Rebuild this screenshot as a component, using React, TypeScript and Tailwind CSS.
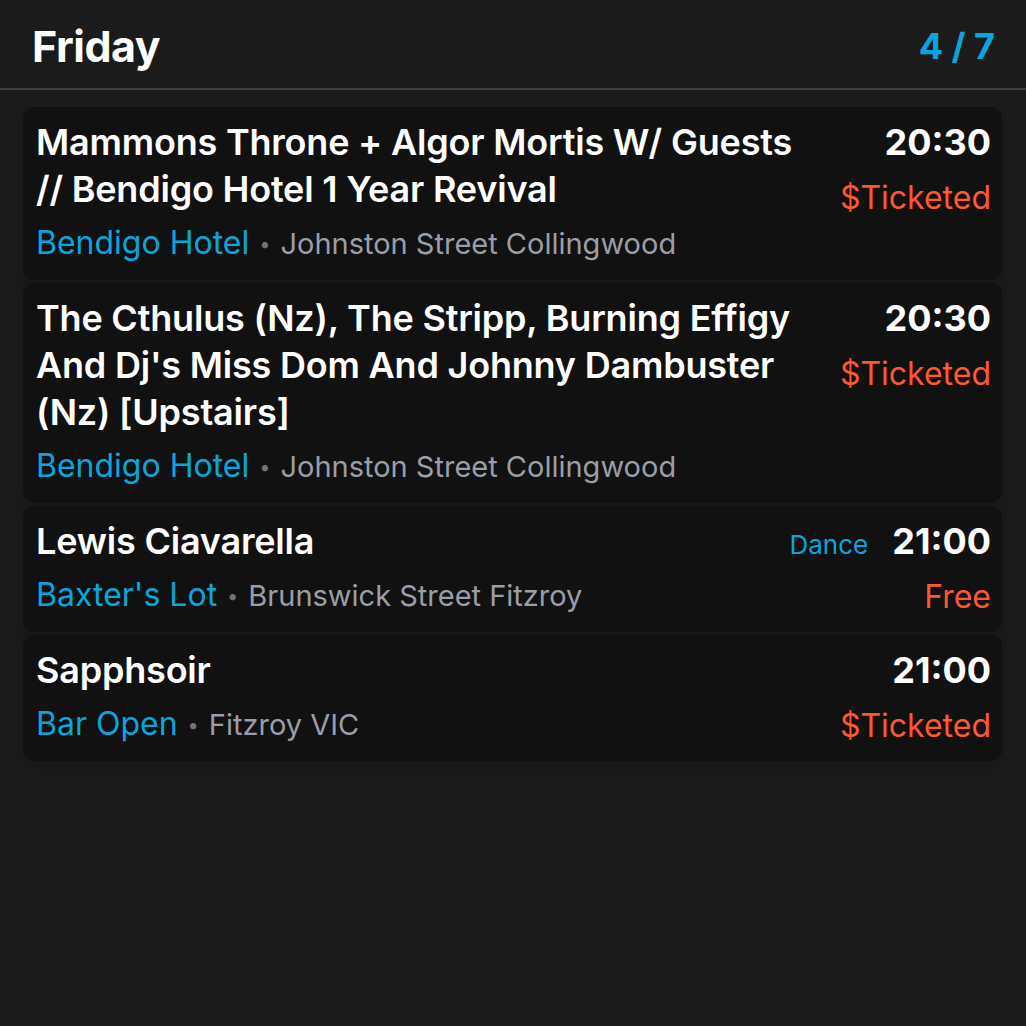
import { Fragment } from 'react';

interface Gig {
  title: string;
  venue: string;
  address: string;
  time: string;
  price: string;
  genre?: string;
}

const GIGS: Gig[] = [
  {
    title: 'Mammons Throne + Algor Mortis W/ Guests // Bendigo Hotel 1 Year Revival',
    venue: 'Bendigo Hotel',
    address: 'Johnston Street Collingwood',
    time: '20:30',
    price: '$Ticketed',
  },
  {
    title: "The Cthulus (Nz), The Stripp, Burning Effigy And Dj's Miss Dom And Johnny Dambuster (Nz) [Upstairs]",
    venue: 'Bendigo Hotel',
    address: 'Johnston Street Collingwood',
    time: '20:30',
    price: '$Ticketed',
  },
  {
    title: 'Lewis Ciavarella',
    venue: "Baxter's Lot",
    address: 'Brunswick Street Fitzroy',
    time: '21:00',
    price: 'Free',
    genre: 'Dance',
  },
  {
    title: 'Sapphsoir',
    venue: 'Bar Open',
    address: 'Fitzroy VIC',
    time: '21:00',
    price: '$Ticketed',
  },
];

const GigCard = ({ gig }: { gig: Gig }) => (
  <div className="flex gap-10 rounded-xl bg-[#111111] pl-[13px] pr-[11px] pt-[12px] pb-[15px] shadow-[0_6px_14px_rgba(0,0,0,0.12)]">
    <div className="flex-1 min-w-0">
      <h3 className="text-[36px] leading-[47px] font-semibold text-white tracking-[-0.2px]">{gig.title}</h3>
      <p className="mt-[8px] text-[32px] leading-[44px] whitespace-nowrap">
        <span className="leading-none text-[#09a6dd]">{gig.venue}</span>
        <span className="mx-[10px] text-[20px] leading-none align-[3px] text-[#6f737c]">•</span>
        <span className="text-[29px] leading-none text-[#9a9ea8]">{gig.address}</span>
      </p>
    </div>
    <div className="flex flex-col items-end shrink-0">
      <div className="flex items-baseline gap-6">
        {gig.genre && <span className="text-[26px] leading-none text-[#09a6dd]">{gig.genre}</span>}
        <span className="text-[36px] leading-[47px] font-bold text-white">{gig.time}</span>
      </div>
      <span className="mt-[12px] text-[32px] leading-[40px] text-[#ff5633]">{gig.price}</span>
    </div>
  </div>
);

export default function App() {
  return (
    <div className="min-h-[1026px] bg-[#1b1b1b] font-['Inter',sans-serif]">
      <header className="flex h-[90px] items-center justify-between border-b-2 border-[#3a404b] pl-8 pr-[31px] pt-[4px]">
        <h1 className="text-[43px] font-bold text-white tracking-[-0.5px]">Friday</h1>
        <span className="text-[36px] font-bold text-[#09a6dd]">
          {['4', '/', '7'].map((c, i) => (
            <Fragment key={i}>{i > 0 && ' '}{c}</Fragment>
          ))}
        </span>
      </header>
      <div className="flex flex-col gap-[3px] pl-[23px] pr-[24px] pt-[17px]">
        {GIGS.map((gig, i) => (
          <GigCard key={i} gig={gig} />
        ))}
      </div>
    </div>
  );
}
